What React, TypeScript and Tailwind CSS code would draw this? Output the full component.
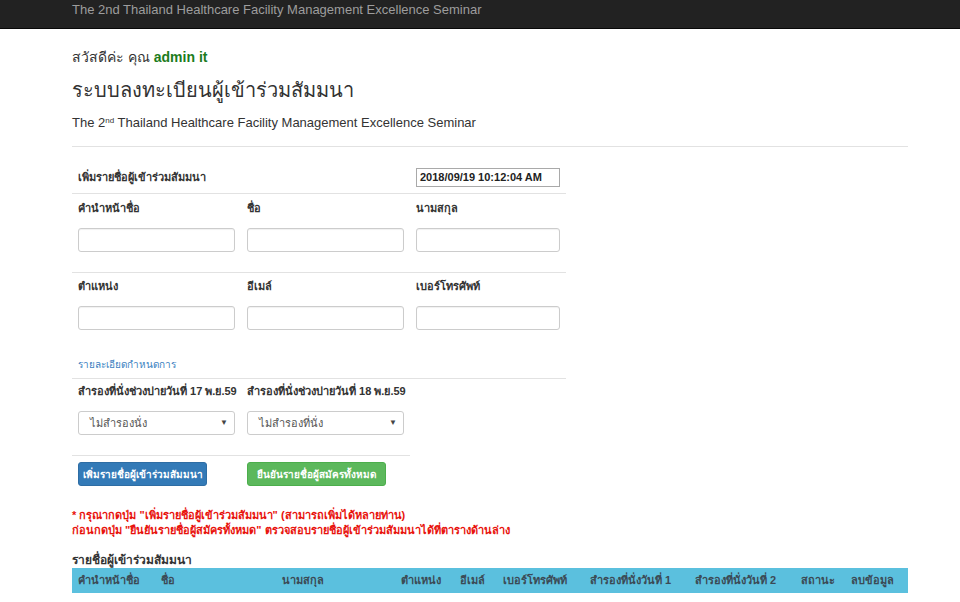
import React from "react";

const Hr = ({ w = "w-full" }: { w?: string }) => <div className={`h-px bg-[#e2e2e2] ${w}`} />;

const Label = ({ children, w }: { children: React.ReactNode; w: string }) => (
  <div className={`${w} text-[11px] leading-[16px] font-bold text-[#333] whitespace-nowrap`}>{children}</div>
);

const Input = ({ w }: { w: string }) => (
  <div className={`${w} h-[24px] rounded-[3px] border border-[#ccc] bg-white shadow-[inset_0_1px_1px_rgba(0,0,0,0.06)]`} />
);

const Select = ({ text }: { text: string }) => (
  <div className="w-[157px] h-[24px] rounded-[3px] border border-[#ccc] bg-white flex items-center justify-between pl-[11px] pr-[6px]">
    <span className="text-[11px] text-[#555]">{text}</span>
    <span className="text-[8px] text-[#444]">▼</span>
  </div>
);

const cols: [string, string][] = [
  ["คำนำหน้าชื่อ", "w-[83px]"],
  ["ชื่อ", "w-[121px]"],
  ["นามสกุล", "w-[119px]"],
  ["ตำแหน่ง", "w-[59px]"],
  ["อีเมล์", "w-[43px]"],
  ["เบอร์โทรศัพท์", "w-[87px]"],
  ["สำรองที่นั่งวันที่ 1", "w-[105px]"],
  ["สำรองที่นั่งวันที่ 2", "w-[106px]"],
  ["สถานะ", "w-[50px]"],
  ["ลบข้อมูล", "w-[63px]"],
];

export default function App() {
  return (
    <div className="min-h-[602px] bg-white text-[#333] font-['Liberation_Sans',Arial,sans-serif]">
      <div className="h-[29px] bg-[#222] border-b border-[#080808] pl-[72px] text-[13px] leading-[20px] text-[#9d9d9d]">
        The 2nd Thailand Healthcare Facility Management Excellence Seminar
      </div>
      <div className="ml-[72px] w-[836px] flex flex-col">
        <div className="mt-[18px] text-[14px] leading-[20px]">
          สวัสดีค่ะ คุณ <b className="text-[#1c7c1c]">admin it</b>
        </div>
        <div className="mt-[8px] text-[20px] leading-[30px]">ระบบลงทะเบียนผู้เข้าร่วมสัมมนา</div>
        <div className="mt-[8px] text-[13px] leading-[20px]">
          The 2<sup className="text-[8px]">nd</sup> Thailand Healthcare Facility Management Excellence Seminar
        </div>
        <div className="mt-[13px]"><Hr /></div>

        <div className="w-[494px] flex flex-col">
          <div className="mt-[19px] h-[22px] flex items-center pl-[6px]">
            <div className="w-[338px] text-[11px] font-bold">เพิ่มรายชื่อผู้เข้าร่วมสัมมนา</div>
            <div className="w-[144px] h-[19px] border border-[#a9a9a9] flex items-center pl-[3px] text-[11px] font-bold text-[#222]">
              2018/09/19 10:12:04 AM
            </div>
          </div>
          <div className="mt-[5px]"><Hr /></div>

          <div className="mt-[6px] flex gap-[12px] pl-[6px]">
            <Label w="w-[157px]">คำนำหน้าชื่อ</Label>
            <Label w="w-[157px]">ชื่อ</Label>
            <Label w="w-[144px]">นามสกุล</Label>
          </div>
          <div className="mt-[12px] flex gap-[12px] pl-[6px]">
            <Input w="w-[157px]" />
            <Input w="w-[157px]" />
            <Input w="w-[144px]" />
          </div>
          <div className="mt-[20px]"><Hr /></div>

          <div className="mt-[5px] flex gap-[12px] pl-[6px]">
            <Label w="w-[157px]">ตำแหน่ง</Label>
            <Label w="w-[157px]">อีเมล์</Label>
            <Label w="w-[144px]">เบอร์โทรศัพท์</Label>
          </div>
          <div className="mt-[12px] flex gap-[12px] pl-[6px]">
            <Input w="w-[157px]" />
            <Input w="w-[157px]" />
            <Input w="w-[144px]" />
          </div>

          <div className="mt-[27px] pl-[6px] text-[10px] leading-[16px] text-[#3a7fc0]">รายละเอียดกำหนดการ</div>
          <div className="mt-[5px]"><Hr /></div>

          <div className="mt-[4px] flex gap-[12px] pl-[6px]">
            <div className="w-[157px] text-[11px] leading-[16px] font-bold whitespace-nowrap">สำรองที่นั่งช่วงบ่ายวันที่ 17 พ.ย.59</div>
            <div className="w-[157px] text-[11px] leading-[16px] font-bold whitespace-nowrap">สำรองที่นั่งช่วงบ่ายวันที่ 18 พ.ย.59</div>
          </div>
          <div className="mt-[12px] flex gap-[12px] pl-[6px]">
            <Select text="ไม่สำรองนั่ง" />
            <Select text="ไม่สำรองที่นั่ง" />
          </div>
          <div className="mt-[20px]"><Hr w="w-[338px]" /></div>

          <div className="mt-[6px] flex pl-[6px]">
            <div className="w-[129px] h-[24px] rounded-[3px] bg-[#337ab7] border border-[#2e6da4] flex items-center justify-center text-[10px] font-bold text-white whitespace-nowrap">
              เพิ่มรายชื่อผู้เข้าร่วมสัมมนา
            </div>
            <div className="ml-[40px] w-[139px] h-[24px] rounded-[3px] bg-[#5cb85c] border border-[#4cae4c] flex items-center justify-center text-[10px] font-bold text-white whitespace-nowrap">
              ยืนยันรายชื่อผู้สมัครทั้งหมด
            </div>
          </div>
        </div>

        <div className="mt-[22px] text-[11px] leading-[15px] font-bold text-[#e8120c]">
          <div>* กรุณากดปุ่ม "เพิ่มรายชื่อผู้เข้าร่วมสัมมนา" (สามารถเพิ่มได้หลายท่าน)</div>
          <div>ก่อนกดปุ่ม "ยืนยันรายชื่อผู้สมัครทั้งหมด" ตรวจสอบรายชื่อผู้เข้าร่วมสัมมนาได้ที่ตารางด้านล่าง</div>
        </div>

        <div className="mt-[14px] text-[12px] leading-[16px] font-bold">รายชื่อผู้เข้าร่วมสัมมนา</div>
        <div className="h-[25px] bg-[#5bc0de] flex items-center">
          {cols.map(([t, w]) => (
            <div key={t} className={`${w} pl-[6px] text-[11px] font-bold text-[#3b4a55] whitespace-nowrap`}>{t}</div>
          ))}
        </div>
      </div>
    </div>
  );
}
